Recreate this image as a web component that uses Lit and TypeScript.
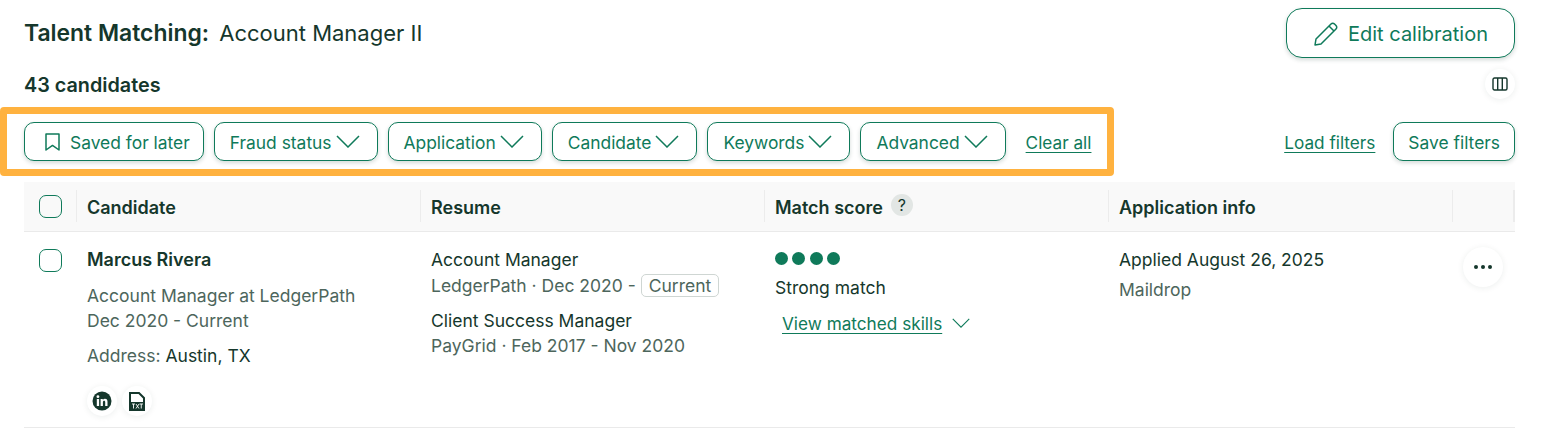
import { LitElement, css, html, svg } from "lit";
import { customElement } from "lit/decorators.js";

const chevron = (w = 24) => html`<svg class="chev" width=${w} height=${Math.round(w * 0.55)} viewBox="0 0 24 13" fill="none" stroke="currentColor" stroke-width="1.5"><path d="M1 1l11 11L23 1" /></svg>`;

const bookmark = svg`<path d="M1 1h13v16l-6.5-4.6L1 17z" fill="none" stroke="currentColor" stroke-width="1.5" stroke-linejoin="round" />`;

@customElement("app-root")
export class AppRoot extends LitElement {
  static styles = css`
    :host {
      display: block;
      font-family: Inter, "Liberation Sans", sans-serif;
      font-size: 17.5px;
      color: #15372c;
      background: #fff;
      height: 428px;
      overflow: hidden;
    }
    .top {
      display: flex;
      justify-content: space-between;
      align-items: center;
      padding: 8px 28px 0 24px;
    }
    .title {
      font-size: 22px;
    }
    .title b {
      font-size: 22.9px;
      font-weight: 600;
      margin-right: 4px;
    }
    .btn {
      display: inline-flex;
      align-items: center;
      box-sizing: border-box;
      height: 39px;
      border: 1px solid #0f7a5a;
      border-radius: 10px;
      background: #fff;
      color: #0f7a5a;
      font: inherit;
      font-size: 17.4px;
      padding: 2px 17px 0 15px;
      gap: 4px;
      box-shadow: 0 2px 4px rgba(21, 55, 44, 0.18);
      white-space: nowrap;
    }
    .chev {
      margin-top: -2px;
    }
    .btn.large {
      height: 50px;
      width: 229px;
      padding: 1px 0 0;
      justify-content: center;
      gap: 9px;
      font-size: 20px;
      border-radius: 16px;
    }
    .btn.saved {
      gap: 10px;
      padding: 1px 13px 0 20px;
    }
    .btn.plain {
      padding: 1px 14px 0;
    }
    .count-row {
      display: flex;
      justify-content: space-between;
      align-items: center;
      padding: 11px 28px 0 24px;
      height: 30px;
    }
    .count {
      font-size: 19.8px;
      font-weight: 600;
      margin-top: 2px;
    }
    .round {
      display: flex;
      align-items: center;
      justify-content: center;
      width: 30px;
      height: 30px;
      border-radius: 50%;
      background: #fff;
      box-shadow: 0 1px 6px rgba(21, 55, 44, 0.08);
    }
    .filter-row {
      display: flex;
      justify-content: space-between;
      align-items: center;
      padding: 8px 28px 0 0;
    }
    .filters {
      display: flex;
      align-items: center;
      gap: 10px;
      border: 7px solid #ffb23f;
      border-radius: 4px;
      padding: 8px 16px 8px 17px;
    }
    .link {
      color: #0f7a5a;
      font-size: 17.2px;
      text-decoration: underline;
      text-underline-offset: 3px;
      white-space: nowrap;
    }
    .filters .link {
      margin: 2px 0 0 10px;
    }
    .right-actions {
      display: flex;
      align-items: center;
      gap: 18px;
    }
    .right-actions .link {
      margin-top: 2px;
    }
    .table {
      margin: 6px 28px 0 24px;
      display: grid;
      grid-template-columns: 53px 344px 344px 344px 344px 62px;
    }
    .head {
      display: flex;
      align-items: center;
      height: 50px;
      background: #f9f9f9;
      border-bottom: 1px solid #eaeaea;
      box-sizing: border-box;
      font-size: 18px;
      font-weight: 600;
      position: relative;
      padding: 2px 0 0 10px;
      gap: 8px;
    }
    .head.sep::after {
      content: "";
      position: absolute;
      right: -1px;
      top: 8px;
      bottom: 9px;
      width: 2px;
      background: #ececec;
    }
    .head.sep:nth-child(6)::after {
      right: 0;
    }
    .check {
      display: block;
      box-sizing: border-box;
      width: 23px;
      height: 23px;
      border: 1px solid #0f7a5a;
      border-radius: 7px;
      margin: 3px 0 0 15px;
    }
    .head .check {
      margin: -2px 0 0 5px;
    }
    .help {
      display: flex;
      align-items: center;
      justify-content: center;
      width: 22px;
      height: 22px;
      border-radius: 50%;
      background: #e2e6e4;
      font-weight: 400;
      font-size: 16px;
      margin-top: -5px;
    }
    .cell {
      box-sizing: border-box;
      height: 196px;
      border-bottom: 1px solid #eaeaea;
      padding: 14px 0 0 10px;
      line-height: 25px;
    }
    .cell.bare {
      padding-left: 0;
    }
    .first {
      line-height: 27px;
    }
    .name {
      font-size: 18px;
      font-weight: 600;
    }
    .muted {
      color: #4d665c;
    }
    .block {
      margin-top: 10px;
    }
    .sub {
      margin-top: 4px;
    }
    .icons {
      display: flex;
      gap: 5px;
      margin-top: 18px;
    }
    .tag {
      display: inline-block;
      border: 1px solid #cfd6d3;
      border-radius: 5px;
      padding: 0 7px;
      line-height: 21px;
    }
    .dots {
      display: flex;
      gap: 4.3px;
      padding-top: 6px;
      height: 29px;
      box-sizing: border-box;
    }
    .dots i {
      width: 13px;
      height: 13px;
      border-radius: 50%;
      background: #0f7a5a;
    }
    .skills {
      display: flex;
      align-items: center;
      gap: 10px;
      margin: 11px 0 0 7px;
      color: #0f7a5a;
    }
    .more {
      width: 40px;
      height: 40px;
      margin: 1px 0 0 10px;
      gap: 3px;
    }
    .more i {
      width: 4px;
      height: 4px;
      border-radius: 50%;
      background: #15372c;
    }
  `;

  private filterBtn(label: string) {
    return html`<button class="btn">${label}${chevron()}</button>`;
  }

  render() {
    return html`
      <div class="top">
        <div class="title"><b>Talent Matching:</b> Account Manager II</div>
        <button class="btn large">
          <svg width="26" height="26" viewBox="0 0 26 26" fill="none" stroke="currentColor" stroke-width="1.5" stroke-linejoin="round">
            <path d="M2 24l1-6L18 3c1-1 2.500-1 3.500 0l1.500 1.500c1 1 1 2.500 0 3.500L8 23z" />
            <path d="M16 5l5 5" />
          </svg>
          Edit calibration
        </button>
      </div>
      <div class="count-row">
        <span class="count">43 candidates</span>
        <span class="round">
          <svg width="16" height="14" viewBox="0 0 16 14" fill="none" stroke="#15372c" stroke-width="1.4">
            <rect x="1" y="1" width="14" height="12" rx="1.500" />
            <path d="M5.700 1v12M10.300 1v12" />
          </svg>
        </span>
      </div>
      <div class="filter-row">
        <div class="filters">
          <button class="btn saved">
            <svg width="15" height="18" viewBox="0 0 15 18">${bookmark}</svg>
            Saved for later
          </button>
          ${["Fraud status", "Application", "Candidate", "Keywords", "Advanced"].map((f) => this.filterBtn(f))}
          <span class="link">Clear all</span>
        </div>
        <div class="right-actions">
          <span class="link">Load filters</span>
          <button class="btn plain">Save filters</button>
        </div>
      </div>
      <div class="table">
        <div class="head sep"><span class="check"></span></div>
        <div class="head sep">Candidate</div>
        <div class="head sep">Resume</div>
        <div class="head sep">Match score <span class="help">?</span></div>
        <div class="head sep">Application info</div>
        <div class="head sep"></div>

        <div class="cell bare"><span class="check"></span></div>
        <div class="cell">
          <div class="name first">Marcus Rivera</div>
          <div class="muted block">Account Manager at LedgerPath<br />Dec 2020 - Current</div>
          <div class="block"><span class="muted">Address:</span> Austin, TX</div>
          <div class="icons">
            <span class="round">
              <svg width="20" height="20" viewBox="0 0 20 20">
                <circle cx="10" cy="10" r="9.500" fill="#15372c" />
                <rect x="4.800" y="8" width="2.300" height="7" fill="#fff" />
                <circle cx="5.950" cy="5.700" r="1.400" fill="#fff" />
                <path d="M8.600 8h2.200v1c.5-.8 1.300-1.200 2.200-1.200 1.800 0 2.500 1.100 2.500 3V15h-2.300v-3.700c0-1-.3-1.500-1.100-1.500s-1.200.6-1.200 1.500V15H8.600z" fill="#fff" />
              </svg>
            </span>
            <span class="round">
              <svg width="16" height="19" viewBox="0 0 16 19">
                <path d="M1 1h9l5 5v12H1z" fill="none" stroke="#15372c" stroke-width="2" />
                <rect x="1" y="10" width="14" height="8" fill="#15372c" />
                <path d="M3 12h3M4.500 12v4.500M7 12l3 4.500M10 12l-3 4.500M10.500 12h3.500M12.250 12v4.500" stroke="#fff" stroke-width=".9" fill="none" />
              </svg>
            </span>
          </div>
        </div>
        <div class="cell">
          <div class="first">Account Manager</div>
          <div class="muted">LedgerPath · Dec 2020 - <span class="tag">Current</span></div>
          <div class="block">Client Success Manager</div>
          <div class="muted">PayGrid · Feb 2017 - Nov 2020</div>
        </div>
        <div class="cell">
          <div class="dots"><i></i><i></i><i></i><i></i></div>
          <div>Strong match</div>
          <div class="skills"><span class="link">View matched skills</span>${chevron(18)}</div>
        </div>
        <div class="cell">
          <div class="first">Applied August 26, 2025</div>
          <div class="muted sub">Maildrop</div>
        </div>
        <div class="cell bare">
          <span class="round more"><i></i><i></i><i></i></span>
        </div>
      </div>
    `;
  }
}
